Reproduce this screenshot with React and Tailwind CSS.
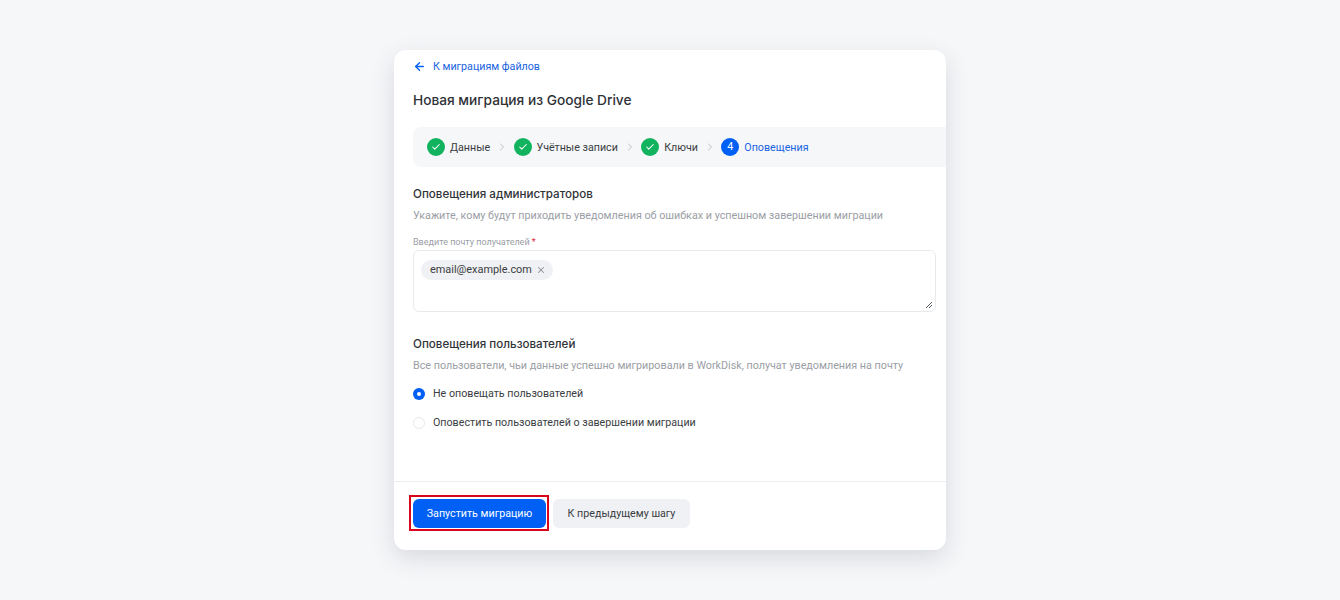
import React from 'react';
import { ArrowLeft, Check, ChevronRight, X } from 'lucide-react';

const STEPS = [
  { label: 'Данные' },
  { label: 'Учётные записи' },
  { label: 'Ключи' },
];

function Step({ label }) {
  return (
    <>
      <span className="w-[18px] h-[18px] rounded-full bg-[#12b35f] flex items-center justify-center shrink-0">
        <Check size={10} strokeWidth={2.5} className="text-white" />
      </span>
      <span className="ml-[5px] pt-[2px] text-[#3a3d42]">{label}</span>
      <ChevronRight size={12} strokeWidth={1.5} className="mx-[5.7px] text-[#a9adb3]" />
    </>
  );
}

function Radio({ checked, label }) {
  return (
    <label className="flex items-center h-[20px] text-[10.7px] text-[#3a3d42]">
      {checked ? (
        <span className="w-[12px] h-[12px] rounded-full bg-[#0060f5] flex items-center justify-center shrink-0">
          <span className="w-[4px] h-[4px] rounded-full bg-white" />
        </span>
      ) : (
        <span className="w-[12px] h-[12px] rounded-full border border-[#e6e8eb] shrink-0" />
      )}
      <span className="ml-[8px]">{label}</span>
    </label>
  );
}

export default function App() {
  return (
    <div className="min-h-[600px] bg-[#f6f7f9] flex items-center justify-center font-['Roboto',sans-serif]">
      <div className="w-[552px] h-[500px] bg-white rounded-[12px] shadow-[0_8px_24px_rgba(30,40,60,0.14)] flex flex-col overflow-hidden">
        <div className="flex-1 pl-[19px] pt-[9px]">
          <a className="flex items-center h-[14px] text-[10.7px] text-[#1a64e0]">
            <ArrowLeft size={13} strokeWidth={2.5} className="text-[#0060f5]" />
            <span className="ml-[7px] pt-[2px]">К миграциям файлов</span>
          </a>
          <h1 className="mt-[17px] text-[13.7px] leading-[20px] font-medium font-['Inter',sans-serif] text-[#2f3237]">Новая миграция из Google Drive</h1>

          <div className="mt-[17px] h-[40px] bg-[#f6f7f9] rounded-l-[8px] flex items-center pl-[14px] text-[10.7px]">
            {STEPS.map(s => <Step key={s.label} label={s.label} />)}
            <span className="w-[18px] h-[18px] rounded-full bg-[#0060f5] text-white flex items-center justify-center shrink-0">4</span>
            <span className="ml-[5px] pt-[2px] text-[#1a64e0]">Оповещения</span>
          </div>

          <h2 className="mt-[19px] text-[11.6px] leading-[16px] font-medium font-['Inter',sans-serif] text-[#2f3237]">Оповещения администраторов</h2>
          <p className="mt-[6px] text-[10.75px] leading-[16px] text-[#9a9ea5]">Укажите, кому будут приходить уведомления об ошибках и успешном завершении миграции</p>

          <div className="mt-[12px] text-[9px] leading-[12px] text-[#9a9ea5]">Введите почту получателей <span className="text-[#e0263c]">*</span></div>
          <div className="relative mt-[2px] mr-[10px] h-[62px] border border-[#e8eaed] rounded-[6px] pl-[7px] pt-[9px] flex items-start">
            <span className="inline-flex items-center h-[20px] pl-[9px] pr-[7px] rounded-full bg-[#f0f1f4] text-[10.9px] text-[#3a3d42]">
              email@example.com
              <X size={10} strokeWidth={2.5} className="ml-[4px] text-[#8d9197]" />
            </span>
            <svg className="absolute right-[2px] bottom-[2px] text-[#55585d]" width="8" height="8" viewBox="0 0 8 8" fill="none" stroke="currentColor" strokeWidth="1">
              <path d="M1 7 7 1M4 7 7 4" />
            </svg>
          </div>

          <h2 className="mt-[24px] text-[11.6px] leading-[16px] font-medium font-['Inter',sans-serif] text-[#2f3237]">Оповещения пользователей</h2>
          <p className="mt-[6px] text-[10.75px] leading-[16px] text-[#9a9ea5]">Все пользователи, чьи данные успешно мигрировали в WorkDisk, получат уведомления на почту</p>

          <div className="mt-[10px] flex flex-col gap-[9px]">
            <Radio checked label="Не оповещать пользователей" />
            <Radio label="Оповестить пользователей о завершении миграции" />
          </div>
        </div>

        <div className="h-[69px] border-t border-[#eceef1] flex items-start pt-[17px] pl-[19px] gap-[7px]">
          <div className="relative">
            <button className="block w-[133px] h-[29px] pt-[1px] rounded-[6px] bg-[#0060f5] text-white text-[10.7px]">Запустить миграцию</button>
            <span className="absolute -top-[4px] -bottom-[3px] -left-[4px] -right-[3px] border-2 border-[#d9061c] pointer-events-none" />
          </div>
          <button className="block w-[137px] h-[29px] pt-[1px] rounded-[6px] bg-[#f0f1f4] text-[#3a3d42] text-[10.7px]">К предыдущему шагу</button>
        </div>
      </div>
    </div>
  );
}
